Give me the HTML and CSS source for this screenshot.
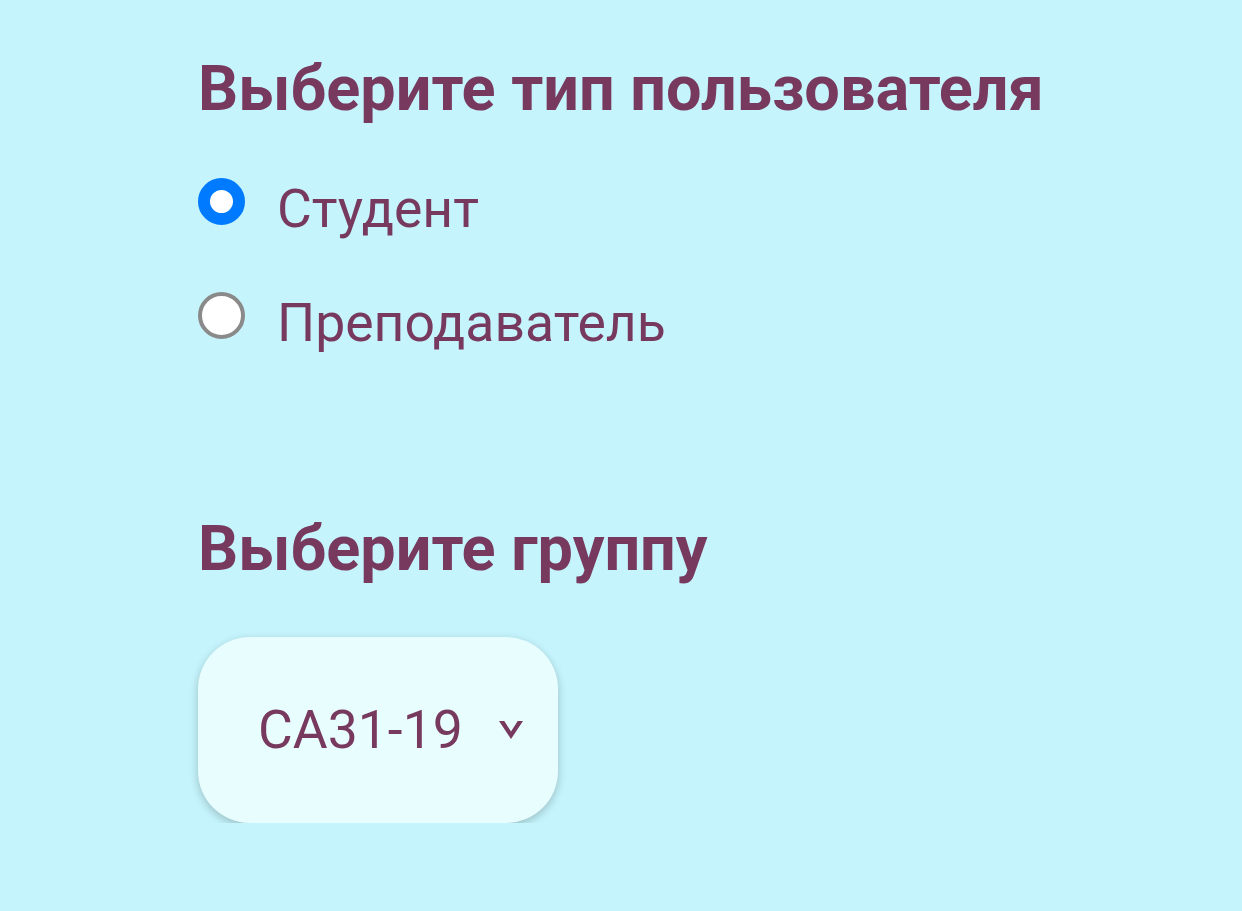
FILE: index.html
```html
<!DOCTYPE html>
<html lang="ru">
<head>
<meta charset="utf-8">
<link rel="stylesheet" href="styles.css">
</head>
<body>
<main class="page">
  <section class="block">
    <h2 class="title">Выберите тип пользователя</h2>
    <div class="radios">
      <label class="radio">
        <span class="dot dot-on"></span>
        <span class="label">Студент</span>
      </label>
      <label class="radio">
        <span class="dot dot-off"></span>
        <span class="label">Преподаватель</span>
      </label>
    </div>
  </section>
  <section class="block block-group">
    <h2 class="title">Выберите группу</h2>
    <div class="select">
      <span class="select-value">CA31-19</span>
      <svg class="chev" width="24" height="18" viewBox="0 0 24 18"><polygon points="0,0 5.3,0 12,10.5 18.7,0 24,0 12,18" fill="#773a5e"/></svg>
    </div>
  </section>
</main>
</body>
</html>
```
FILE: styles.css
```css
html, body {
  margin: 0;
  padding: 0;
  background: #c5f4fc;
}
body {
  font-family: Roboto, "Noto Sans", sans-serif;
  color: #773a5e;
}
.page {
  padding: 52px 0 0 198px;
  display: flex;
  flex-direction: column;
}
.title {
  margin: 0;
  font-size: 63px;
  font-weight: 700;
  line-height: 74px;
}
.radios {
  display: flex;
  flex-direction: column;
  gap: 40px;
  margin-top: 38px;
}
.radio {
  display: flex;
  align-items: center;
  gap: 32px;
  height: 74px;
}
.dot {
  width: 47px;
  height: 47px;
  border-radius: 50%;
  box-sizing: border-box;
  background: #fff;
  flex: none;
}
.dot-on {
  border: 12.5px solid #007aff;
}
.dot-off {
  border: 4px solid #8a8a8a;
}
.label {
  font-size: 53.5px;
  line-height: 58px;
  margin-top: 16px;
}
.block-group {
  margin-top: 160px;
}
.select {
  margin-top: 51px;
  width: 360px;
  height: 186px;
  box-sizing: border-box;
  border-radius: 52px;
  background: #e8fdfe;
  box-shadow: 0 3px 8px rgba(0, 0, 0, 0.22);
  display: flex;
  align-items: center;
  padding-left: 60px;
  gap: 36px;
}
.select-value {
  font-size: 53.5px;
  line-height: 66px;
}
.chev {
  flex: none;
}
```
